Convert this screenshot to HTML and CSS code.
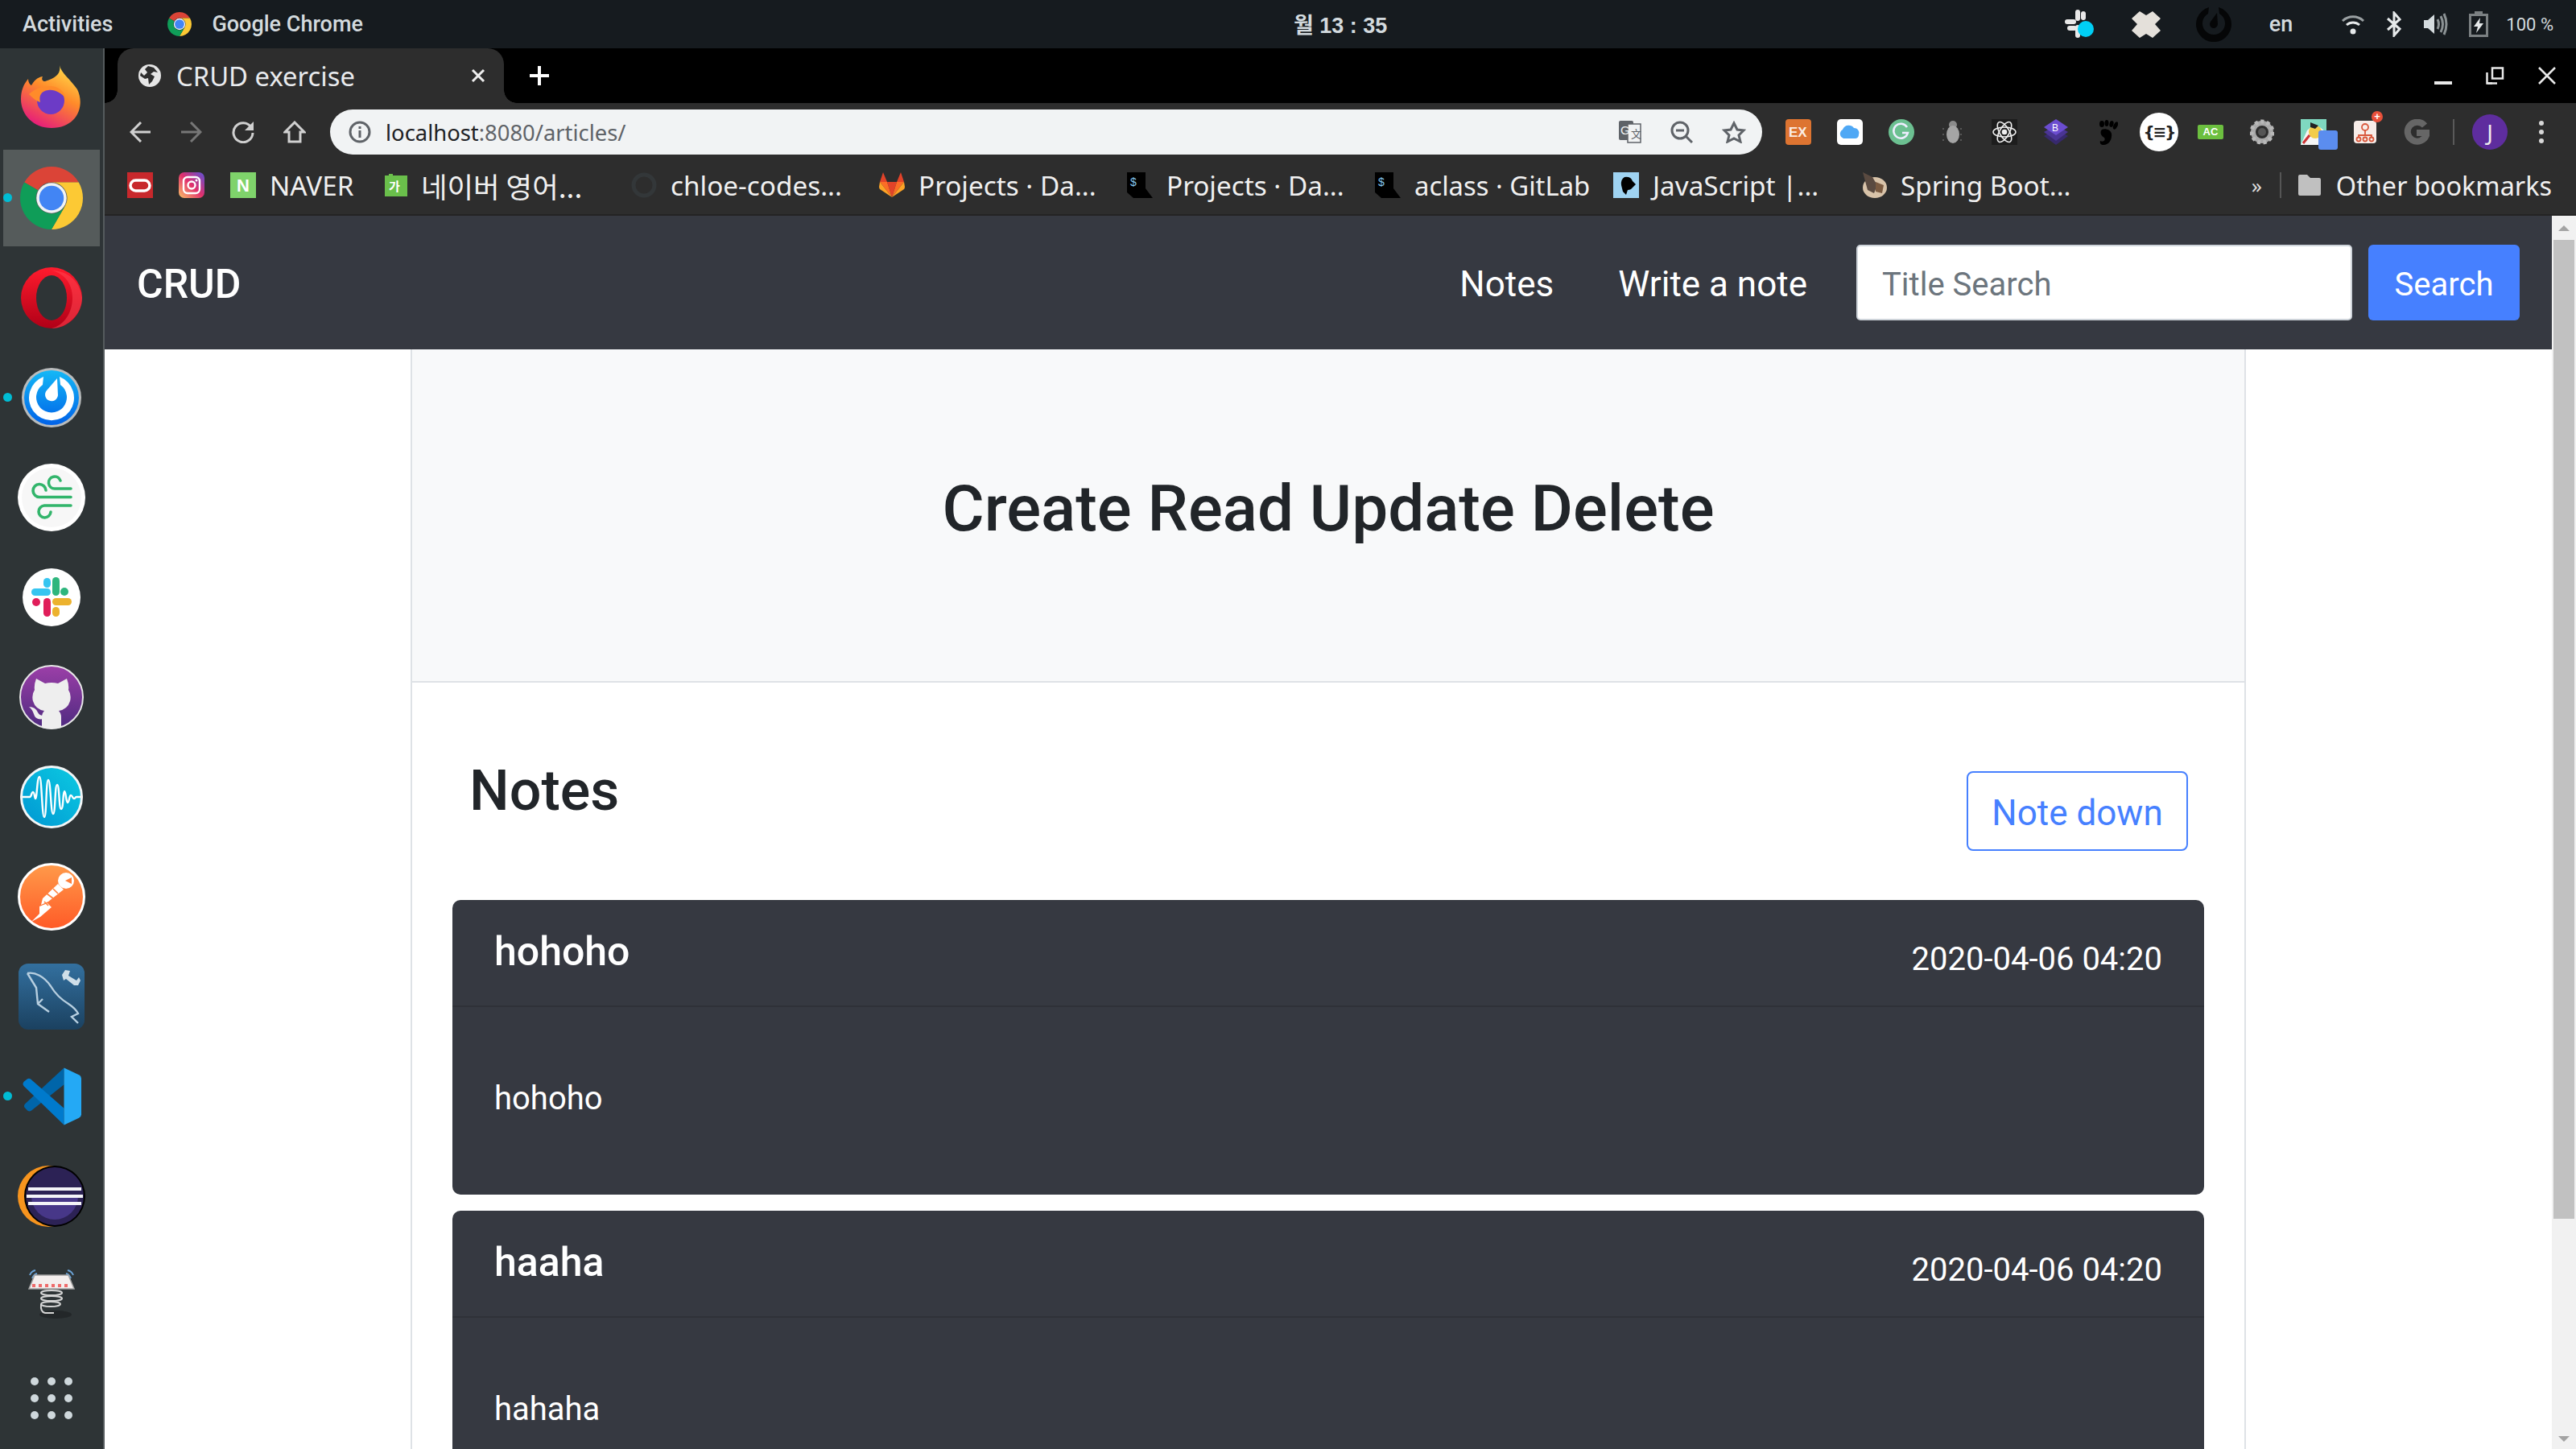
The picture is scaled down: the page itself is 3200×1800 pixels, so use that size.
FILE: index.html
```html
<!DOCTYPE html>
<html lang="en">
<head>
    <meta charset="UTF-8">
    <title>CRUD exercise</title>
    <link rel="stylesheet" href="styles.css">
</head>
<body>
    <svg class="defs" width="0" height="0">
        <defs>
            <symbol id="chrome" viewBox="4 4 40 40">
                <path fill="#db4437" d="M24 4A20 20 0 0 1 41.32 14H24A10 10 0 0 0 15.34 19L6.68 14A20 20 0 0 1 24 4Z"/>
                <path fill="#fcc934" d="M41.32 14A20 20 0 0 1 24 44L32.66 29A10 10 0 0 0 24 14Z"/>
                <path fill="#0f9d58" d="M6.68 14A20 20 0 0 0 24 44L32.66 29A10 10 0 0 1 15.34 19Z"/>
                <circle cx="24" cy="24" r="9.6" fill="#f1f3f4"/>
                <circle cx="24" cy="24" r="7.8" fill="#4285f4"/>
            </symbol>
            <linearGradient id="ffGrad" x1="0.8" y1="0" x2="0.3" y2="1">
                <stop offset="0" stop-color="#ffe14a"/>
                <stop offset="0.45" stop-color="#ff8a2a"/>
                <stop offset="1" stop-color="#e5197d"/>
            </linearGradient>
            <linearGradient id="opGrad" x1="0" y1="0" x2="0" y2="1">
                <stop offset="0" stop-color="#ff1b2d"/>
                <stop offset="1" stop-color="#b00017"/>
            </linearGradient>
            <linearGradient id="mmGrad" x1="0" y1="0" x2="0" y2="1">
                <stop offset="0" stop-color="#14b8f6"/>
                <stop offset="1" stop-color="#0062e8"/>
            </linearGradient>
            <linearGradient id="ghGrad" x1="0" y1="0" x2="0" y2="1">
                <stop offset="0" stop-color="#9c3fa8"/>
                <stop offset="1" stop-color="#4e2a80"/>
            </linearGradient>
            <linearGradient id="waveGrad" x1="0" y1="1" x2="1" y2="0">
                <stop offset="0" stop-color="#0096d2"/>
                <stop offset="1" stop-color="#0ccbe2"/>
            </linearGradient>
            <linearGradient id="pmGrad" x1="0" y1="0" x2="0" y2="1">
                <stop offset="0" stop-color="#ff9a4a"/>
                <stop offset="1" stop-color="#ff5a27"/>
            </linearGradient>
            <linearGradient id="sqlGrad" x1="0" y1="0" x2="0" y2="1">
                <stop offset="0" stop-color="#33709f"/>
                <stop offset="1" stop-color="#1b4160"/>
            </linearGradient>
            <linearGradient id="igGrad" x1="0" y1="1" x2="1" y2="0">
                <stop offset="0" stop-color="#fdc468"/>
                <stop offset="0.5" stop-color="#e1306c"/>
                <stop offset="1" stop-color="#5b51d8"/>
            </linearGradient>
        </defs>
    </svg>

    <header class="topbar">
        <span class="top-label activities">Activities</span>
        <svg class="app-icon" width="30" height="30"><use href="#chrome"/></svg>
        <span class="top-label">Google Chrome</span>
        <span class="top-label clock">월 13 : 35</span>
        <div class="tray">
            <svg class="tray-slack" width="38" height="38" viewBox="0 0 38 38">
                <g fill="#e8e8e8">
                    <rect x="14" y="1" width="6" height="14" rx="3"/>
                    <rect x="1" y="13" width="14" height="6" rx="3"/>
                    <rect x="21" y="3" width="6" height="11" rx="3"/>
                    <rect x="4" y="21" width="12" height="6" rx="3"/>
                    <rect x="14" y="20" width="6" height="16" rx="3"/>
                </g>
                <circle cx="27" cy="25" r="10" fill="#00cff5"/>
            </svg>
            <svg class="tray-drop" width="36" height="33" viewBox="0 0 36 33">
                <path fill="#e4e0da" d="M10 0 18 5 26 0 36 9 29 16 36 24 26 33 18 28 10 33 0 24 7 16 0 9Z"/>
            </svg>
            <svg class="tray-mm" width="44" height="44" viewBox="0 0 44 44">
                <path fill="#050607" d="M16 1A22 22 0 1 0 28 1L29 9A14 14 0 1 1 15 9Z"/>
                <path fill="#050607" d="M26 8 27 22A5 5 0 1 1 18 19Z"/>
            </svg>
            <span class="top-label tray-lang">en</span>
            <svg class="tray-wifi" width="30" height="28" viewBox="0 0 30 28" fill="none" stroke="#9aa0a2" stroke-width="3">
                <path d="M2 10A19 19 0 0 1 28 10"/>
                <path stroke="#e6e9ea" d="M7 15A12 12 0 0 1 23 15"/>
                <circle cx="15" cy="23" r="3.5" fill="#e6e9ea" stroke="none"/>
            </svg>
            <svg class="tray-bt" width="20" height="32" viewBox="0 0 20 32" fill="none" stroke="#e6e9ea" stroke-width="3">
                <path d="M2 9 17 22 10 30V2L17 10 2 23"/>
            </svg>
            <svg class="tray-vol" width="30" height="28" viewBox="0 0 30 28" fill="none">
                <path fill="#d5dcdf" d="M0 9H5L13 2V26L5 19H0Z"/>
                <path stroke="#8b9294" stroke-width="3" d="M17 8Q20 14 17 20M21 4Q26 14 21 24M25 1Q31 14 25 27"/>
            </svg>
            <svg class="tray-bat" width="24" height="32" viewBox="0 0 24 32">
                <rect x="1.5" y="4.5" width="21" height="26" fill="none" stroke="#7b8082" stroke-width="3"/>
                <rect x="7" y="0" width="10" height="4" fill="#7b8082"/>
                <path fill="#e6e9ea" d="M14 8 6 19H11L9 27 18 15H13Z"/>
            </svg>
            <span class="top-label tray-pct">100 %</span>
        </div>
    </header>

    <div class="desktop">
        <nav class="dock">
            <div class="dock-item firefox">
                <svg width="76" height="78" viewBox="0 0 76 78">
                    <path fill="url(#ffGrad)" d="M48 0C50 10 62 18 70 30 80 50 70 78 38 78 16 78 0 62 0 42 0 32 3 24 9 17 9 21 11 24 13 25 16 20 20 15 27 14 25 18 27 20 30 20 44 16 50 10 48 0Z"/>
                    <circle cx="37" cy="44" r="17" fill="#6c3bc6"/>
                    <path fill="#ff8b2a" d="M10 36C16 30 26 26 36 26 46 26 54 32 56 42 50 34 42 30 34 31 25 32 22 38 24 46 18 44 14 40 10 36Z"/>
                </svg>
            </div>
            <div class="dock-item active running">
                <svg width="78" height="78"><use href="#chrome"/></svg>
            </div>
            <div class="dock-item">
                <svg width="76" height="76" viewBox="0 0 76 76">
                    <circle cx="38" cy="38" r="38" fill="url(#opGrad)"/>
                    <path fill="#ff4451" d="M38 4C58 4 74 18 76 38 76 58 58 76 38 76 54 72 64 56 64 38 64 20 54 8 38 4Z" opacity=".55"/>
                    <ellipse cx="38" cy="38" rx="19" ry="28" fill="#2e3436"/>
                </svg>
            </div>
            <div class="dock-item running">
                <svg width="74" height="74" viewBox="0 0 74 74">
                    <circle cx="37" cy="37" r="37" fill="#b9bcbd"/>
                    <circle cx="37" cy="37" r="34" fill="url(#mmGrad)"/>
                    <path fill="#fff" d="M27 11A28 28 0 1 0 47 11L48 21A19 19 0 1 1 26 21Z"/>
                    <path fill="#fff" d="M44 13 45 34A8 8 0 1 1 31 28Z"/>
                </svg>
            </div>
            <div class="dock-item">
                <svg width="84" height="84" viewBox="0 0 84 84" fill="none">
                    <circle cx="42" cy="42" r="42" fill="#fff"/>
                    <circle cx="42" cy="42" r="37" fill="#f7f7f7"/>
                    <g stroke="#32b56b" stroke-width="3.6" stroke-linecap="round">
                        <path d="M66 31H46A7.5 7.5 0 1 1 53 21"/>
                        <path d="M66 41.5H27A8 8 0 1 1 35 33"/>
                        <path d="M66 52H33A7.5 7.5 0 1 0 41 60"/>
                    </g>
                </svg>
            </div>
            <div class="dock-item">
                <svg width="72" height="72" viewBox="0 0 72 72">
                    <circle cx="36" cy="36" r="36" fill="#fff"/>
                    <g fill="#36c5f0"><rect x="26" y="12" width="9" height="12" rx="4.5"/><rect x="11" y="25" width="24" height="9" rx="4.5"/></g>
                    <g fill="#2eb67d"><rect x="37" y="11" width="9" height="23" rx="4.5"/><circle cx="52" cy="29" r="5"/></g>
                    <g fill="#e01e5a"><rect x="26" y="37" width="9" height="23" rx="4.5"/><circle cx="17" cy="42" r="5"/></g>
                    <g fill="#ecb22e"><rect x="37" y="37" width="24" height="9" rx="4.5"/><rect x="37" y="48" width="9" height="12" rx="4.5"/></g>
                </svg>
            </div>
            <div class="dock-item">
                <svg width="80" height="80" viewBox="0 0 80 80">
                    <circle cx="40" cy="40" r="39" fill="url(#ghGrad)" stroke="#e8e8e8" stroke-width="2"/>
                    <path fill="#eee" d="M21 17 32 23Q40 21 48 23L59 17Q62 25 61 31 65 37 63 45 60 55 49 57 52 60 52 65V78Q40 81 28 78V65Q28 60 31 57 20 55 17 45 15 37 19 31 18 25 21 17Z"/>
                    <path fill="#eee" d="M12 52Q20 52 23 59 25 63 30 63V67Q20 69 18 61 16 55 12 52Z"/>
                </svg>
            </div>
            <div class="dock-item">
                <svg width="78" height="78" viewBox="0 0 78 78" fill="none">
                    <circle cx="39" cy="39" r="37.5" fill="url(#waveGrad)" stroke="#f2f6f7" stroke-width="3"/>
                    <path stroke="#fff" stroke-width="2.4" stroke-linejoin="round" d="M3 39H12C14 39 14 33 16 33S18 41 19 41C21 41 21 14 24 14S27 64 30 64 32 18 35 18 38 60 41 60 43 24 46 24 48 54 51 54 53 32 55 32 57 46 59 46 61 37 63 37 65 41 67 41 68 39 70 39H75"/>
                </svg>
            </div>
            <div class="dock-item">
                <svg width="84" height="84" viewBox="0 0 84 84">
                    <circle cx="42" cy="42" r="40.5" fill="url(#pmGrad)" stroke="#fff" stroke-width="3"/>
                    <circle cx="60" cy="22" r="10" fill="#fff"/>
                    <path fill="#ff7f3a" d="M59 22 67 18 67 26Z"/>
                    <path fill="#fff" d="M50 26 57 33 38 48 29 52 31 44ZM27 54 37 50 42 55 28 67 17 73 27 63Z"/>
                    <path fill="none" stroke="#ff7f3a" stroke-width="1.6" d="M36 38 44 44M44 32 50 38M33 48 38 53"/>
                </svg>
            </div>
            <div class="dock-item">
                <svg width="82" height="82" viewBox="0 0 82 82" fill="none">
                    <rect width="82" height="82" rx="12" fill="url(#sqlGrad)"/>
                    <path stroke="#b7cfe0" stroke-width="2.4" d="M11 12C20 10 32 16 40 28 46 38 52 44 62 50 68 54 72 58 74 62L66 66 74 74M11 12 22 30 24 50 38 60M24 50 30 44"/>
                    <path fill="#cfdfe9" d="M58 8 64 9 62 15 72 21 75 17 77 21 74 27 69 27 59 19 56 21 54 14Z"/>
                </svg>
            </div>
            <div class="dock-item running">
                <svg width="74" height="74" viewBox="0 0 100 100">
                    <path fill="#0065a9" d="M71 2 6 62Q2 66 6 70L10 74Q13 76 16 74L71 30Z"/>
                    <path fill="#007acc" d="M71 98 4 33Q0 29 4 25L9 21Q12 19 15 21L71 70Z"/>
                    <path fill="#24a9f5" d="M71 2 96 14Q100 16 100 20V80Q100 84 96 86L71 98Z"/>
                </svg>
            </div>
            <div class="dock-item">
                <svg width="84" height="76" viewBox="0 0 84 76">
                    <circle cx="38" cy="38" r="38" fill="#f7941e"/>
                    <circle cx="46" cy="38" r="38" fill="#000"/>
                    <circle cx="46" cy="38" r="36" fill="#2c2255"/>
                    <path fill="#473788" d="M17 38A29 29 0 0 0 75 38Z"/>
                    <g fill="#f4f4f8"><rect x="13" y="27" width="66" height="4"/><rect x="11" y="36" width="70" height="4"/><rect x="13" y="45" width="66" height="4"/></g>
                </svg>
            </div>
            <div class="dock-item spring">
                <svg width="58" height="68" viewBox="0 0 58 68" fill="none">
                    <ellipse cx="34" cy="58" rx="20" ry="5" fill="#232729"/>
                    <path stroke="#6aa2d6" stroke-width="2" d="M2 9Q4 4 9 3M5 13Q7 8 11 7M56 9Q54 4 49 3M53 13Q51 8 47 7"/>
                    <path fill="#f4efee" stroke="#a4a4a4" stroke-width="1.5" d="M8 9H50L57 26H1Z"/>
                    <path stroke="#ee6b6b" stroke-width="4" stroke-dasharray="4 4" d="M5 22H53"/>
                    <g stroke="#d5d5d5" stroke-width="2">
                        <ellipse cx="29" cy="31" rx="13" ry="3"/>
                        <ellipse cx="29" cy="38" rx="13" ry="3"/>
                        <ellipse cx="28" cy="45" rx="12" ry="3"/>
                        <path d="M16 45Q15 55 21 56H32"/>
                    </g>
                </svg>
            </div>
            <div class="dock-item">
                <div class="app-grid">
                    <i></i><i></i><i></i><i></i><i></i><i></i><i></i><i></i><i></i>
                </div>
            </div>
        </nav>

        <div class="browser">
            <div class="tabstrip">
                <div class="tab">
                    <svg class="tab-globe" width="28" height="28" viewBox="0 0 28 28">
                        <circle cx="14" cy="14" r="14" fill="#e6e6e6"/>
                        <path fill="#2d2d2d" d="M12 2 8 6 11 10 7 14 3 10 2 14 8 18 12 17 13 25 17 21 20 15 15 12 19 9 24 10 19 4Z"/>
                    </svg>
                    <span class="tab-title">CRUD exercise</span>
                    <svg class="tab-close" width="18" height="18" viewBox="0 0 18 18" stroke="#eee" stroke-width="3"><path d="M2 2 16 16M16 2 2 16"/></svg>
                </div>
                <svg class="new-tab" width="24" height="24" viewBox="0 0 24 24" stroke="#fff" stroke-width="4"><path d="M12 0V24M0 12H24"/></svg>
                <div class="win-controls">
                    <svg width="22" height="4"><rect width="22" height="4" fill="#e8e8e8"/></svg>
                    <svg width="23" height="22" viewBox="0 0 23 22" fill="none" stroke="#e8e8e8" stroke-width="2.5"><rect x="8" y="1.5" width="13" height="13"/><path d="M8 20.5H1.5V7"/><path d="M1.5 20.5H14"/></svg>
                    <svg width="22" height="22" viewBox="0 0 22 22" stroke="#e8e8e8" stroke-width="2.5"><path d="M1 1 21 21M21 1 1 21"/></svg>
                </div>
            </div>

            <div class="toolbar">
                <div class="tool">
                    <svg width="26" height="26" viewBox="0 0 26 26" fill="none" stroke="#d0d0d0" stroke-width="3"><path d="M26 13H3M14 1 2 13 14 25"/></svg>
                </div>
                <div class="tool">
                    <svg width="26" height="26" viewBox="0 0 26 26" fill="none" stroke="#777" stroke-width="3"><path d="M0 13H23M12 1 24 13 12 25"/></svg>
                </div>
                <div class="tool">
                    <svg width="28" height="28" viewBox="0 0 28 28" fill="none" stroke="#d0d0d0" stroke-width="3"><path d="M24 8A12 12 0 1 0 26 15"/><path fill="#d0d0d0" stroke="none" d="M27 1V12H16Z"/></svg>
                </div>
                <div class="tool">
                    <svg width="28" height="28" viewBox="0 0 28 28" fill="none" stroke="#d0d0d0" stroke-width="3"><path d="M2 14 14 2 26 14H21V26H7V14Z"/></svg>
                </div>
                <div class="omnibox">
                    <svg class="omni-info" width="28" height="28" viewBox="0 0 28 28" fill="none" stroke="#5f6368" stroke-width="3">
                        <circle cx="14" cy="14" r="12"/>
                        <path d="M14 12V21M14 7V10"/>
                    </svg>
                    <span class="url"><b>localhost</b>:8080/articles/</span>
                    <div class="omni-actions">
                        <svg width="28" height="28" viewBox="0 0 28 28">
                            <rect width="18" height="24" rx="2" fill="#5f6368"/>
                            <rect x="11" y="4" width="16" height="23" fill="#f1f3f4" stroke="#5f6368" stroke-width="1.5"/>
                            <text class="svg-t" x="2" y="17" font-size="15" fill="#f1f3f4">G</text>
                            <text class="svg-t" x="15" y="21" font-size="13" fill="#5f6368">文</text>
                        </svg>
                        <svg width="28" height="28" viewBox="0 0 28 28" fill="none" stroke="#5f6368" stroke-width="3">
                            <circle cx="12" cy="12" r="10"/>
                            <path d="M7 12H17M19 19 27 27"/>
                        </svg>
                        <svg width="30" height="28" viewBox="0 0 30 28" fill="none" stroke="#5f6368" stroke-width="3"><path d="M15 3 19 11 27 12 21 18 23 26 15 22 7 26 9 18 3 12 11 11Z"/></svg>
                    </div>
                </div>
                <div class="ext">
                    <svg width="32" height="32" viewBox="0 0 32 32">
                        <rect width="32" height="32" rx="4" fill="#dd7431"/>
                        <text class="svg-t" x="4" y="22" font-size="17" font-weight="700" fill="#fbeee4">EX</text>
                    </svg>
                </div>
                <div class="ext">
                    <svg width="32" height="32" viewBox="0 0 32 32">
                        <rect width="32" height="32" rx="5" fill="#fff"/>
                        <path fill="#4fa8f5" d="M8 24A6 6 0 0 1 7 13 8 8 0 0 1 21 11 6 6 0 0 1 27 19 5 5 0 0 1 23 24Z"/>
                    </svg>
                </div>
                <div class="ext">
                    <svg width="32" height="32" viewBox="0 0 32 32" fill="none">
                        <circle cx="16" cy="16" r="16" fill="#6cc091"/>
                        <path stroke="#eef" stroke-width="2.5" d="M23 10A9 9 0 1 0 24 17H17"/>
                    </svg>
                </div>
                <div class="ext">
                    <svg width="28" height="28" viewBox="0 0 28 28">
                        <circle cx="14" cy="5" r="5" fill="#8b8b8b"/>
                        <ellipse cx="14" cy="17" rx="8" ry="11" fill="#a5a5a5"/>
                        <path stroke="#666" stroke-width="1.5" stroke-dasharray="2 3" d="M1 10H5M1 17H5M1 24H5M23 10H27M23 17H27M23 24H27"/>
                    </svg>
                </div>
                <div class="ext">
                    <svg width="32" height="32" viewBox="0 0 32 32" fill="none" stroke="#f0f0f0" stroke-width="1.6">
                        <rect width="32" height="32" fill="#1d1d1d" stroke="none"/>
                        <ellipse cx="16" cy="16" rx="14" ry="6"/>
                        <ellipse cx="16" cy="16" rx="14" ry="6" transform="rotate(60 16 16)"/>
                        <ellipse cx="16" cy="16" rx="14" ry="6" transform="rotate(120 16 16)"/>
                        <circle cx="16" cy="16" r="2.5" fill="#f0f0f0"/>
                    </svg>
                </div>
                <div class="ext">
                    <svg width="32" height="32" viewBox="0 0 32 32">
                        <path fill="#37296d" d="M16 12 31 21 16 32 1 21Z"/>
                        <path fill="#4a3594" d="M16 7 31 16 16 27 1 16Z"/>
                        <path fill="#6b4dd0" d="M16 0 31 10 16 20 1 10Z"/>
                        <text class="svg-t" x="11" y="15" font-size="12" fill="#fff">B</text>
                    </svg>
                </div>
                <div class="ext">
                    <svg width="26" height="32" viewBox="0 0 26 32">
                        <path d="M6 13C10 11 17 13 18 18 19 25 15 32 8 32 5 32 3 30 4 27 8 29 11 26 9 23 5 21 3 16 6 13Z"/>
                        <ellipse cx="6" cy="6" rx="3" ry="4"/>
                        <ellipse cx="12" cy="5" rx="2.5" ry="4"/>
                        <ellipse cx="18" cy="6" rx="2.5" ry="4" transform="rotate(15 18 6)"/>
                        <ellipse cx="23" cy="8" rx="2.5" ry="5" transform="rotate(25 23 8)"/>
                    </svg>
                </div>
                <div class="ext">
                    <div class="json-badge">{≡}</div>
                </div>
                <div class="ext">
                    <div class="ac-badge">AC</div>
                </div>
                <div class="ext">
                    <svg width="30" height="32" viewBox="0 0 30 32" fill="none">
                        <circle cx="15" cy="16" r="11" stroke="#a8a8a8" stroke-width="6"/>
                        <circle cx="15" cy="16" r="13" stroke="#b8b8b8" stroke-width="5" stroke-dasharray="4 3.4"/>
                        <circle cx="15" cy="16" r="5" fill="#555"/>
                    </svg>
                </div>
                <div class="ext ext-over">
                    <svg width="32" height="32" viewBox="0 0 32 32">
                        <rect width="32" height="32" fill="#f5f5f5"/>
                        <path fill="#7fd8c0" d="M0 0H32V18Q20 2 8 14L0 32Z"/>
                        <circle cx="18" cy="16" r="8" fill="#f2cc4a"/>
                        <path fill="#222" d="M12 4 22 8 18 12 12 10Z"/>
                        <path stroke="#c33" stroke-width="3" d="M3 30 11 20"/>
                    </svg>
                    <span class="ext-blue"></span>
                </div>
                <div class="ext ext-over">
                    <svg width="28" height="28" viewBox="0 0 28 28" fill="none" stroke="#d9583c" stroke-width="1.8">
                        <rect width="28" height="28" rx="4" fill="#f7ece8" stroke="none"/>
                        <circle cx="14" cy="8" r="4"/>
                        <path d="M14 12V18M6 21V18H22V21"/>
                        <circle cx="6" cy="23" r="2.5"/><circle cx="14" cy="23" r="2.5"/><circle cx="22" cy="23" r="2.5"/>
                    </svg>
                    <span class="ext-plus">+</span>
                </div>
                <div class="ext">
                    <svg width="32" height="32" viewBox="0 0 32 32" fill="none">
                        <path stroke="#666" stroke-width="8" d="M26 8A12 12 0 1 0 28 20V17H16"/>
                    </svg>
                </div>
                <span class="tool-divider"></span>
                <div class="ext"><div class="avatar">J</div></div>
                <div class="ext"><div class="menu-dots"><i></i><i></i><i></i></div></div>
            </div>

            <div class="bookmarks">
                <div class="bm bm-icon">
                    <svg width="32" height="32" viewBox="0 0 32 32" fill="none">
                        <rect width="32" height="32" fill="#c8282c"/>
                        <rect x="4" y="10" width="24" height="13" rx="6.5" stroke="#fff" stroke-width="3.5"/>
                    </svg>
                </div>
                <div class="bm bm-icon">
                    <svg width="32" height="32" viewBox="0 0 32 32" fill="none">
                        <rect width="32" height="32" rx="7" fill="url(#igGrad)"/>
                        <rect x="6" y="6" width="20" height="20" rx="5" stroke="#fff" stroke-width="2.4"/>
                        <circle cx="16" cy="16" r="4.5" stroke="#fff" stroke-width="2.4"/>
                        <circle cx="22" cy="10" r="1.5" fill="#fff"/>
                    </svg>
                </div>
                <div class="bm bm-naver">
                    <svg width="32" height="32" viewBox="0 0 32 32">
                        <rect width="32" height="32" fill="#7fd36b"/>
                        <text class="svg-t" x="8" y="24" font-size="22" font-weight="700" fill="#fff">N</text>
                    </svg>
                    <span>NAVER</span>
                </div>
                <div class="bm bm-dict">
                    <svg width="28" height="28" viewBox="0 0 28 28">
                        <path fill="#6abf4b" d="M0 2H5V0H10V2H28V28H0Z"/>
                        <text class="svg-t kr" x="5" y="21" font-size="15" font-weight="700" fill="#fff">가</text>
                    </svg>
                    <span class="kr">네이버 영어...</span>
                </div>
                <div class="bm bm-wide">
                    <svg width="32" height="32" viewBox="0 0 32 32" fill="none"><circle cx="16" cy="16" r="13" stroke="#333739" stroke-width="5"/></svg>
                    <span>chloe-codes...</span>
                </div>
                <div class="bm bm-wide">
                    <svg width="32" height="32" viewBox="0 0 32 32">
                        <path fill="#e24329" d="M16 31 10 12H22Z"/>
                        <path fill="#fc6d26" d="M16 31 10 12H1ZM16 31 22 12H31Z"/>
                        <path fill="#fca326" d="M1 12 0 18Q0 20 1 21L16 31ZM31 12 32 18Q32 20 31 21L16 31Z"/>
                        <path fill="#e24329" d="M1 12 5 0 10 12ZM31 12 27 0 22 12Z"/>
                    </svg>
                    <span>Projects · Da...</span>
                </div>
                <div class="bm bm-wide">
                    <svg width="32" height="32" viewBox="0 0 32 32">
                        <path d="M0 0H23V20L32 32H8L0 25Z"/>
                        <text class="svg-t" x="4" y="17" font-size="14" fill="#84c7ee">$</text>
                    </svg>
                    <span>Projects · Da...</span>
                </div>
                <div class="bm bm-aclass">
                    <svg width="32" height="32" viewBox="0 0 32 32">
                        <path d="M0 0H23V20L32 32H8L0 25Z"/>
                        <text class="svg-t" x="4" y="17" font-size="14" fill="#84c7ee">$</text>
                    </svg>
                    <span>aclass · GitLab</span>
                </div>
                <div class="bm bm-wide">
                    <svg width="32" height="32" viewBox="0 0 32 32">
                        <rect width="32" height="32" fill="#9fd3f2"/>
                        <path d="M14 6Q22 5 24 11L28 15 24 19Q22 22 18 22L16 28 12 24 10 16Q9 9 14 6Z"/>
                    </svg>
                    <span>JavaScript |...</span>
                </div>
                <div class="bm">
                    <svg width="32" height="32" viewBox="0 0 32 32">
                        <ellipse cx="17" cy="19" rx="15" ry="13" fill="#d8c3a9"/>
                        <path fill="#5a4a40" d="M2 0 14 6 20 16 16 26 8 22Z"/>
                        <path fill="#7a5a40" d="M18 12 28 16 26 26 18 24Z"/>
                    </svg>
                    <span>Spring Boot...</span>
                </div>
                <div class="bm-end">
                    <span class="bm-more">»</span>
                    <span class="bm-divider"></span>
                    <svg width="28" height="26" viewBox="0 0 28 26"><path fill="#c0c0c0" d="M2 0H11L15 4H26Q28 4 28 6V24Q28 26 26 26H2Q0 26 0 24V2Q0 0 2 0Z"/></svg>
                    <span class="bm-other">Other bookmarks</span>
                </div>
            </div>
            <div class="chrome-line"></div>

            <div class="viewport">
                <div class="page">
                    <div class="navbar">
                        <a class="brand" href="#">CRUD</a>
                        <a class="nav-link" href="#">Notes</a>
                        <a class="nav-link" href="#">Write a note</a>
                        <form class="search">
                            <input class="search-input" type="text" placeholder="Title Search">
                            <button class="btn-search" type="button">Search</button>
                        </form>
                    </div>
                    <div class="container">
                        <div class="jumbotron">
                            <h1>Create Read Update Delete</h1>
                        </div>
                        <div class="notes-head">
                            <h2>Notes</h2>
                            <a class="btn-outline" href="#">Note down</a>
                        </div>
                        <div class="notes-list">
                            <div class="card">
                                <div class="card-header">
                                    <h5>hohoho</h5>
                                    <span class="card-date">2020-04-06 04:20</span>
                                </div>
                                <div class="card-body">hohoho</div>
                            </div>
                            <div class="card">
                                <div class="card-header">
                                    <h5>haaha</h5>
                                    <span class="card-date">2020-04-06 04:20</span>
                                </div>
                                <div class="card-body">hahaha</div>
                            </div>
                        </div>
                    </div>
                </div>
                <div class="scrollbar">
                    <span class="arrow-up"></span>
                    <span class="thumb"></span>
                    <span class="arrow-down"></span>
                </div>
            </div>
        </div>
    </div>
</body>
</html>
```

FILE: styles.css
```css
* {
    box-sizing: border-box;
}
html, body {
    margin: 0;
    height: 1800px;
    overflow: hidden;
}
body {
    font-family: Roboto, "Noto Sans CJK KR", sans-serif;
    background: #fff;
}
.defs {
    position: absolute;
}
.svg-t {
    font-family: "Liberation Sans", "Noto Sans CJK SC", sans-serif;
}
.kr {
    font-family: "Noto Sans CJK KR", sans-serif;
}

/* gnome top bar */
.topbar {
    height: 60px;
    background: #161b1f;
    display: flex;
    align-items: center;
}
.top-label {
    font-size: 27px;
    font-weight: 500;
    color: #d3dade;
    white-space: nowrap;
}
.activities {
    margin-left: 28px;
}
.app-icon {
    margin-left: 68px;
    margin-right: 25px;
}
.clock {
    margin-left: 1156px;
    margin-bottom: 2px;
    font-family: "Liberation Sans", "Noto Sans CJK KR", sans-serif;
    font-weight: 700;
}
.tray {
    margin-left: auto;
    padding-right: 28px;
    display: flex;
    align-items: center;
}
.tray-drop {
    margin-left: 46px;
}
.tray-mm {
    margin-left: 44px;
}
.tray-lang {
    margin-left: 47px;
    margin-right: 60px;
}
.tray-bt {
    margin-left: 26px;
}
.tray-vol {
    margin-left: 27px;
}
.tray-bat {
    margin-left: 26px;
}
.tray-pct {
    margin-left: 22px;
    font-size: 22px;
    font-weight: 400;
}

.desktop {
    display: flex;
    height: 1740px;
}

/* dock */
.dock {
    width: 130px;
    flex: none;
    background: #2e3436;
    border-right: 2px solid #555b5d;
}
.dock-item {
    height: 124px;
    display: flex;
    align-items: center;
    justify-content: center;
    position: relative;
}
.dock-item.active {
    background: #555b5b;
    margin: 2px 4px;
    height: 120px;
}
.dock-item.running::before {
    content: "";
    position: absolute;
    left: 4px;
    top: 56px;
    width: 11px;
    height: 11px;
    border-radius: 50%;
    background: #00bcd4;
}
.dock-item.active::before {
    left: 0;
    top: 54px;
}
.dock-item.firefox {
    padding-bottom: 4px;
}
.dock-item.spring {
    padding-bottom: 2px;
}
.app-grid {
    display: grid;
    grid-template-columns: repeat(3, 10px);
    gap: 11px;
    margin-top: 6px;
}
.app-grid i {
    width: 10px;
    height: 10px;
    border-radius: 50%;
    background: #cfd8dc;
}

/* chrome */
.browser {
    flex: 1;
    min-width: 0;
    display: flex;
    flex-direction: column;
    font-family: "Noto Sans", "Noto Sans CJK KR", sans-serif;
}
.tabstrip {
    height: 68px;
    background: #000;
    display: flex;
    align-items: center;
    padding-left: 16px;
}
.tab {
    width: 480px;
    height: 68px;
    background: #2d2d2d;
    border-radius: 20px 20px 0 0;
    display: flex;
    align-items: center;
    padding-left: 26px;
    position: relative;
}
.tab::before, .tab::after {
    content: "";
    position: absolute;
    bottom: 0;
    width: 16px;
    height: 16px;
}
.tab::before {
    left: -16px;
    background: radial-gradient(circle at 0 0, #000 15.5px, #2d2d2d 16px);
}
.tab::after {
    right: -16px;
    background: radial-gradient(circle at 100% 0, #000 15.5px, #2d2d2d 16px);
}
.tab-title {
    margin-left: 19px;
    font-size: 32.8px;
    color: #e8eaed;
    white-space: nowrap;
}
.tab-close {
    margin-left: auto;
    margin-right: 23px;
}
.new-tab {
    margin-left: 32px;
}
.win-controls {
    margin-left: auto;
    display: flex;
    align-items: center;
    gap: 42px;
    padding-right: 25px;
}
.win-controls svg:first-child {
    margin-top: 18px;
}
.toolbar {
    height: 72px;
    background: #2d2d2d;
    display: flex;
    align-items: center;
    padding-left: 12px;
}
.tool, .ext {
    width: 64px;
    height: 64px;
    flex: none;
    display: flex;
    align-items: center;
    justify-content: center;
    position: relative;
}
.omnibox {
    margin-left: 12px;
    margin-right: 13px;
    width: 1779px;
    height: 56px;
    flex: none;
    background: #f1f3f4;
    border-radius: 28px;
    display: flex;
    align-items: center;
    padding-left: 23px;
}
.url {
    margin-left: 18px;
    font-size: 27.4px;
    color: #5f6368;
}
.url b {
    font-weight: 400;
    color: #202124;
}
.omni-actions {
    margin-left: auto;
    display: flex;
    align-items: center;
    gap: 36px;
    padding-right: 20px;
}
.json-badge {
    width: 48px;
    height: 48px;
    border-radius: 50%;
    background: #fff;
    color: #222;
    font: 700 20px "DejaVu Sans", sans-serif;
    display: flex;
    align-items: center;
    justify-content: center;
    letter-spacing: -2px;
}
.ac-badge {
    width: 32px;
    height: 18px;
    background: #6cbf3f;
    border-radius: 2px;
    color: #fff;
    font: 700 13px "Liberation Sans", sans-serif;
    text-align: center;
    line-height: 18px;
}
.ext-blue {
    position: absolute;
    left: 38px;
    top: 30px;
    width: 24px;
    height: 24px;
    background: #5b8def;
    border-radius: 3px;
}
.ext-plus {
    position: absolute;
    left: 40px;
    top: 6px;
    width: 14px;
    height: 14px;
    border-radius: 50%;
    background: #e8503a;
    color: #fff;
    font: 700 13px/13px "Liberation Sans", sans-serif;
    text-align: center;
}
.tool-divider {
    width: 2px;
    height: 32px;
    background: #5a5a5a;
    margin-left: 13px;
    margin-right: 12px;
}
.avatar {
    width: 44px;
    height: 44px;
    border-radius: 50%;
    background: #5e2d9e;
    color: #eee;
    font-size: 28px;
    display: flex;
    align-items: center;
    justify-content: center;
}
.menu-dots {
    display: flex;
    flex-direction: column;
    gap: 5px;
}
.menu-dots i {
    width: 6px;
    height: 6px;
    border-radius: 50%;
    background: #d8d8d8;
}
.bookmarks {
    height: 66px;
    background: #2d2d2d;
    display: flex;
    align-items: center;
    padding: 0 0 6px 28px;
    font-size: 33.3px;
    color: #f0f0f0;
    white-space: nowrap;
}
.bm {
    display: flex;
    align-items: center;
    gap: 17px;
}
.bm-icon {
    width: 64px;
}
.bm-naver {
    width: 192px;
}
.bm-dict {
    width: 306px;
}
.bm-dict span {
    font-size: 35.4px;
}
.bm-wide {
    width: 308px;
}
.bm-aclass {
    width: 296px;
}
.bm-aclass span {
    font-size: 32.8px;
}
.bm-end {
    margin-left: auto;
    display: flex;
    align-items: center;
    padding-right: 30px;
}
.bm-more {
    font-size: 26px;
    color: #ddd;
}
.bm-divider {
    width: 2px;
    height: 32px;
    background: #555;
    margin: 0 21px 0 22px;
}
.bm-other {
    margin-left: 19px;
    font-size: 32.4px;
}
.chrome-line {
    height: 2px;
    background: #232323;
}

/* page */
.viewport {
    flex: 1;
    min-height: 0;
    display: flex;
    overflow: hidden;
}
.page {
    flex: 1;
    min-width: 0;
    color: #212529;
    font-family: Roboto, sans-serif;
}
.navbar {
    height: 166px;
    background: #363941;
    display: flex;
    align-items: center;
    padding: 0 40px;
}
.navbar a {
    text-decoration: none;
    margin-top: 3px;
}
.brand {
    margin-right: auto;
    font-size: 50px;
    font-weight: 500;
    color: #fff;
}
.nav-link {
    font-size: 44px;
    color: #fff;
    margin-right: 80px;
}
.nav-link + .nav-link {
    margin-right: 61px;
}
.search {
    display: flex;
    gap: 20px;
    margin: 0;
}
.search-input {
    width: 616px;
    height: 94px;
    border: 2px solid #ced4da;
    border-radius: 5px;
    padding: 4px 30px 0;
    font: 40px Roboto, sans-serif;
    color: #495057;
}
.search-input::placeholder {
    color: #6c757d;
}
.btn-search {
    width: 188px;
    height: 94px;
    border: none;
    border-radius: 6px;
    padding: 4px 0 0;
    background: #4680ff;
    color: #fff;
    font: 40px Roboto, sans-serif;
}
.container {
    width: 2280px;
    margin: 0 auto;
    border-left: 2px solid #dee2e6;
    border-right: 2px solid #dee2e6;
    min-height: 1400px;
}
.jumbotron {
    height: 414px;
    background: #f8f9fa;
    border-bottom: 2px solid #dee2e6;
    display: flex;
    align-items: center;
    justify-content: center;
    padding-bottom: 16px;
}
h1 {
    margin: 0;
    font-size: 80px;
    font-weight: 500;
    line-height: 1.2;
}
.notes-head {
    display: flex;
    justify-content: space-between;
    align-items: flex-start;
    padding: 92px 70px 0 71px;
}
h2 {
    margin: 0;
    font-size: 70px;
    font-weight: 500;
    line-height: 1.2;
}
.btn-outline {
    margin-top: 18px;
    width: 275px;
    height: 99px;
    padding-top: 5px;
    border: 2px solid #4680ff;
    border-radius: 8px;
    color: #4680ff;
    font-size: 44px;
    display: flex;
    align-items: center;
    justify-content: center;
    text-decoration: none;
}
.notes-list {
    padding: 61px 50px 0;
    display: flex;
    flex-direction: column;
    gap: 20px;
}
.card {
    background: #363941;
    border-radius: 10px;
    color: #fff;
}
.card-header {
    height: 133px;
    border-bottom: 2px solid rgba(0, 0, 0, .125);
    display: flex;
    justify-content: space-between;
    align-items: flex-start;
    padding: 35px 52px 0;
}
h5 {
    margin: 0;
    font-size: 50px;
    font-weight: 500;
    line-height: 58px;
}
.card-date {
    margin-top: 15px;
    font-size: 40px;
    line-height: 48px;
}
.card-body {
    padding: 84px 52px 89px;
    font-size: 40px;
    line-height: 60px;
}
.scrollbar {
    width: 30px;
    flex: none;
    background: #f1f1f1;
    position: relative;
}
.thumb {
    position: absolute;
    left: 2px;
    top: 30px;
    width: 26px;
    height: 1216px;
    background: #c1c1c1;
}
.arrow-up, .arrow-down {
    position: absolute;
    left: 8px;
    width: 0;
    height: 0;
    border-left: 7px solid transparent;
    border-right: 7px solid transparent;
}
.arrow-up {
    top: 12px;
    border-bottom: 7px solid #a3a3a3;
}
.arrow-down {
    bottom: 9px;
    border-top: 7px solid #a3a3a3;
}
```
